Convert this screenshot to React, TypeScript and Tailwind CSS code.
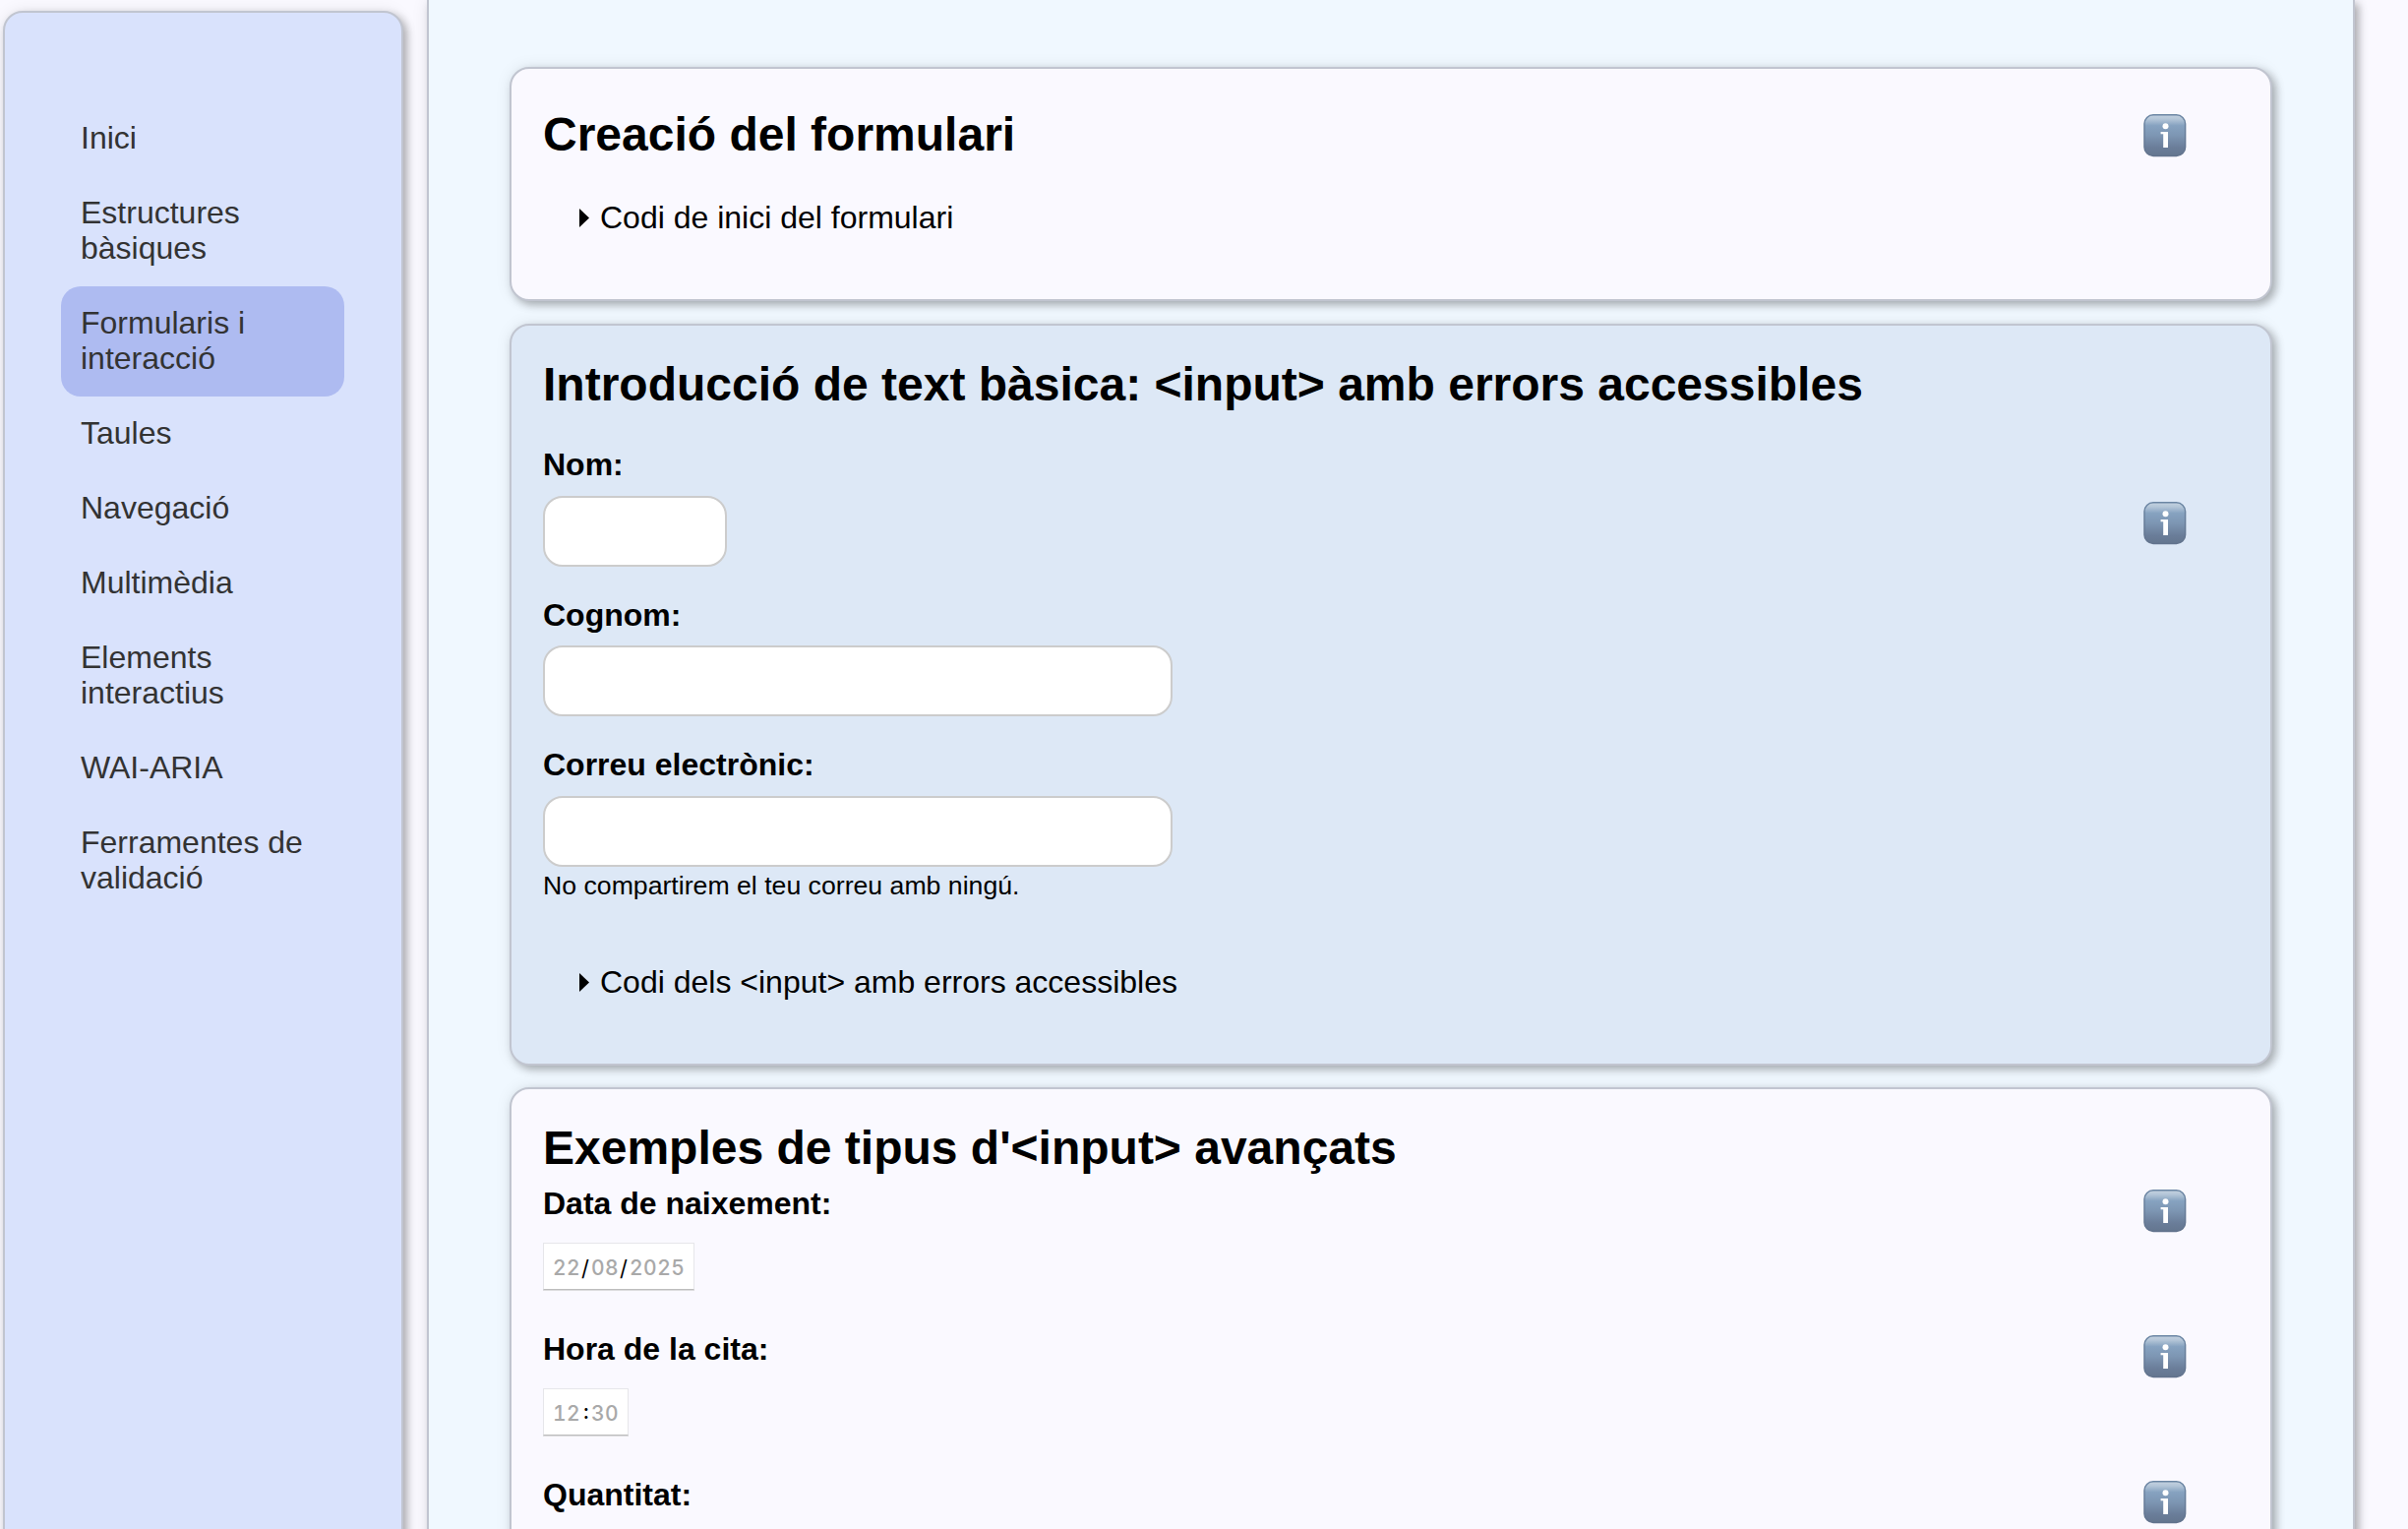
import React from "react";

const NAV = [
  "Inici",
  "Estructures bàsiques",
  "Formularis i interacció",
  "Taules",
  "Navegació",
  "Multimèdia",
  "Elements interactius",
  "WAI-ARIA",
  "Ferramentes de validació",
];

function InfoIcon({ className = "" }: { className?: string }) {
  return (
    <svg viewBox="0 0 44 44" className={"h-11 w-11 shrink-0 " + className} aria-label="Informació">
      <defs>
        <linearGradient id="info-fill" x1="0" y1="0" x2="0" y2="1">
          <stop offset="0" stopColor="#c3d1df" />
          <stop offset="0.1" stopColor="#b4c6d8" />
          <stop offset="0.26" stopColor="#86a2c0" />
          <stop offset="0.5" stopColor="#7d96b3" />
          <stop offset="0.8" stopColor="#6a7d99" />
          <stop offset="1" stopColor="#64768f" />
        </linearGradient>
        <linearGradient id="info-edge" x1="0" y1="0" x2="0" y2="1">
          <stop offset="0" stopColor="#6b86a4" />
          <stop offset="1" stopColor="#62738d" />
        </linearGradient>
      </defs>
      <rect x="1" y="0.8" width="41.6" height="41.6" rx="9" fill="url(#info-fill)" stroke="url(#info-edge)" strokeWidth="1.5" />
      <circle cx="22.5" cy="12.2" r="3" fill="#fff" />
      <path d="M17.6 18.1H25v15.9h-4.8V20.3h-2.6z" fill="#fff" />
    </svg>
  );
}

function Card({ className, children }: { className: string; children: React.ReactNode }) {
  return (
    <section
      className={
        "w-[1792px] shrink-0 rounded-[20px] border-2 border-[#c1c5d0] px-8 shadow-[4px_4px_8px_rgba(0,0,0,0.28),0_0_16px_rgba(0,0,0,0.08)] " +
        className
      }
    >
      {children}
    </section>
  );
}

function Heading({ children }: { children: React.ReactNode }) {
  return <h2 className="pt-px text-[48px] leading-[56px] font-bold whitespace-nowrap">{children}</h2>;
}

function Details({ className, children }: { className: string; children: React.ReactNode }) {
  return (
    <div className={"ml-[37px] flex items-start leading-9 " + className}>
      <svg viewBox="0 0 10 19" className="mt-[9px] mr-[11px] h-[19px] w-[10px]">
        <path d="M0 0L10 9.5L0 19z" fill="#000" />
      </svg>
      <span>{children}</span>
    </div>
  );
}

function Field({ label, inputClass, className }: { label: string; inputClass: string; className: string }) {
  return (
    <div className={className}>
      <label className="block leading-9 font-bold">{label}</label>
      <div className={"h-[72px] rounded-[20px] border-2 border-[#cccccc] bg-white " + inputClass} />
    </div>
  );
}

function Digits({ className, children }: { className: string; children: string }) {
  return <span className={"font-medium text-[#a9a9a9] " + className}>{children}</span>;
}

function PickerBox({ className, children }: { className: string; children: React.ReactNode }) {
  return (
    <div
      className={
        "mt-[22px] flex h-12 border border-[#e6e6ea] border-b-[#bdbdbd] bg-white pt-[11px] pl-[9px] font-[Inter,sans-serif] text-[21px] leading-7 tracking-[0.5px] tabular-nums shadow-[0_1px_0_#dcdcde] " +
        className
      }
    >
      {children}
    </div>
  );
}

function PickerRow({ label, className, children }: { label: string; className: string; children?: React.ReactNode }) {
  return (
    <div className={"flex items-start justify-between " + className}>
      <div>
        <label className="block leading-9 font-bold">{label}</label>
        {children}
      </div>
      <InfoIcon className="mt-1 mr-[53px]" />
    </div>
  );
}

export default function App() {
  return (
    <div className="flex h-[1554px] w-[2448px] overflow-hidden bg-[#faf9ff] font-['Liberation_Sans',Arial,sans-serif] text-[32px] text-black">
      <nav className="mt-[11px] ml-[3px] h-[1600px] w-[407px] shrink-0 rounded-[20px] border-2 border-[#c1c5d0] bg-[#d9e2fc] px-[57px] pt-[90px] shadow-[4px_4px_8px_rgba(0,0,0,0.28),0_0_16px_rgba(0,0,0,0.08)]">
        <ul>
          {NAV.map((item) => (
            <li
              key={item}
              className={
                "w-72 rounded-[20px] px-5 pt-[19px] pb-[21px] leading-9 text-[#333333] " +
                (item.startsWith("Formularis") ? "bg-[#aebbf1]" : "")
              }
            >
              {item}
            </li>
          ))}
        </ul>
      </nav>

      <main className="ml-6 flex h-[1800px] w-[1960px] shrink-0 flex-col border-x-2 border-[#c1c5d0] bg-[#f0f8ff] pt-[68px] pl-[82px] shadow-[4px_4px_8px_rgba(0,0,0,0.28),0_0_16px_rgba(0,0,0,0.08)]">
        <Card className="h-[238px] bg-[#faf9ff] pt-[38px]">
          <div className="flex items-start justify-between">
            <Heading>Creació del formulari</Heading>
            <InfoIcon className="mt-2 mr-[53px]" />
          </div>
          <Details className="mt-[38px]">Codi de inici del formulari</Details>
        </Card>

        <Card className="mt-[23px] h-[754px] bg-[#dde8f6] pt-[31px]">
          <Heading>Introducció de text bàsica: &lt;input&gt; amb errors accessibles</Heading>
          <div className="mt-[35px] flex items-start justify-between">
            <div>
              <Field label="Nom:" className="" inputClass="mt-[14px] w-[187px]" />
              <Field label="Cognom:" className="mt-[31px]" inputClass="mt-[13px] w-[640px]" />
              <Field label="Correu electrònic:" className="mt-[31px]" inputClass="mt-[14px] w-[640px]" />
              <p className="mt-1 text-[26.67px] leading-[30px]">No compartirem el teu correu amb ningú.</p>
            </div>
            <InfoIcon className="mt-14 mr-[53px]" />
          </div>
          <Details className="mt-[65px]">Codi dels &lt;input&gt; amb errors accessibles</Details>
        </Card>

        <Card className="mt-[22px] h-[600px] bg-[#faf9ff] pt-[31px]">
          <Heading>Exemples de tipus d'&lt;input&gt; avançats</Heading>
          <PickerRow label="Data de naixement:" className="mt-[10px]">
            <PickerBox className="w-[154px]">
              <Digits className="w-[29px]">22</Digits>
              <span className="w-[10px] text-[22px]">/</span>
              <Digits className="w-[29px]">08</Digits>
              <span className="w-[10px] text-[22px]">/</span>
              <Digits className="w-[56px]">2025</Digits>
            </PickerBox>
          </PickerRow>
          <PickerRow label="Hora de la cita:" className="mt-[42px]">
            <PickerBox className="w-[87px]">
              <Digits className="w-[29px]">12</Digits>
              <span className="-mt-[2px] w-[10px] pl-[2px] font-medium">:</span>
              <Digits className="w-[29px]">30</Digits>
            </PickerBox>
          </PickerRow>
          <PickerRow label="Quantitat:" className="mt-[42px]" />
        </Card>
      </main>
    </div>
  );
}
